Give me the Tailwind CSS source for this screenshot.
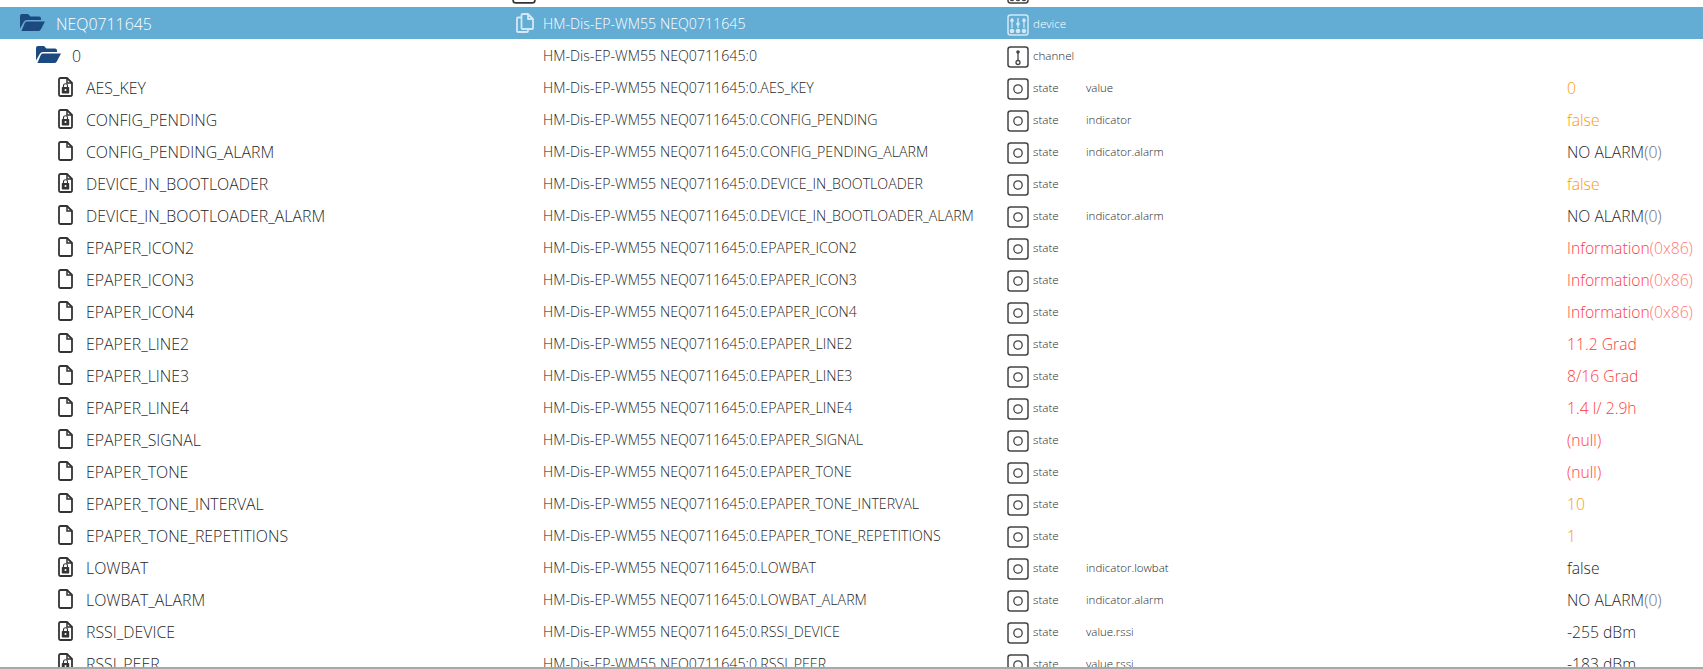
<!DOCTYPE html>
<html lang="en">
<head>
<meta charset="UTF-8">
<title>Objects</title>
<script src="https://cdn.jsdelivr.net/npm/@tailwindcss/browser@4"></script>
</head>
<body class="bg-white overflow-hidden font-['Open_Sans',sans-serif] text-[#1f1f1f]">
<svg class="hidden">
  <symbol id="folder" viewBox="0 0 25 17">
    <path fill="#1c4a80" d="M0 2a2 2 0 0 1 2-2h6l2.500 2.500H19a2 2 0 0 1 2 2V6H7a3.500 3.500 0 0 0-3.100 1.800L0 14.500z"/>
    <path fill="#1c4a80" d="M7.200 7.500H25l-4.200 8a3 3 0 0 1-2.600 1.500H1.400l3.400-8.100a2.600 2.600 0 0 1 2.400-1.400z"/>
  </symbol>
  <symbol id="file" viewBox="0 0 15 20">
    <path fill="none" stroke="currentColor" stroke-width="1.800" stroke-linejoin="round" d="M2.500 1H9l5 5v11.500a1.500 1.500 0 0 1-1.500 1.500h-10A1.500 1.500 0 0 1 1 17.500v-15A1.500 1.500 0 0 1 2.500 1z"/>
    <path fill="none" stroke="currentColor" stroke-width="1.500" d="M9 1v5h5"/>
  </symbol>
  <symbol id="lock" viewBox="0 0 15 20">
    <rect x="3.800" y="10" width="7.400" height="6.500" rx=".8" fill="currentColor"/>
    <path fill="none" stroke="currentColor" stroke-width="1.100" d="M5.500 10V8.800a2 2 0 0 1 4 0V10"/>
    <circle cx="7.500" cy="13" r="1" fill="#fff"/>
  </symbol>
  <symbol id="copy" viewBox="0 0 18 20">
    <path fill="none" stroke="#d3e8f4" stroke-width="1.800" stroke-linejoin="round" d="M6.500 1H12l5 5v9a1 1 0 0 1-1 1H6.500a1 1 0 0 1-1-1V2a1 1 0 0 1 1-1zM12 1v5h5"/>
    <path fill="none" stroke="#d3e8f4" stroke-width="1.800" stroke-linejoin="round" d="M5.500 4.500H2a1 1 0 0 0-1 1V18a1 1 0 0 0 1 1h9a1 1 0 0 0 1-1v-2"/>
  </symbol>
  <symbol id="box" viewBox="0 0 22 22">
    <rect x="1" y="1" width="20" height="20" rx="2.500" fill="none" stroke="currentColor" stroke-width="1.500"/>
  </symbol>
  <symbol id="state" viewBox="0 0 22 22">
    <rect x="1" y="1" width="20" height="20" rx="2.500" fill="none" stroke="currentColor" stroke-width="1.500"/>
    <circle cx="11" cy="11" r="4.200" fill="none" stroke="currentColor" stroke-width="1.300"/>
  </symbol>
  <symbol id="channel" viewBox="0 0 22 22">
    <rect x="1" y="1" width="20" height="20" rx="2.500" fill="none" stroke="currentColor" stroke-width="1.500"/>
    <path stroke="currentColor" stroke-width="1.300" d="M11 5v10"/>
    <circle cx="11" cy="6" r="1.800" fill="currentColor"/>
    <circle cx="11" cy="16.500" r="2" fill="#fff" stroke="currentColor" stroke-width="1.300"/>
  </symbol>
  <symbol id="device" viewBox="0 0 22 22">
    <rect x="1" y="1" width="20" height="20" rx="2.500" fill="none" stroke="currentColor" stroke-width="1.500"/>
    <path stroke="currentColor" stroke-width="1.300" d="M5 4v10M11 4v10M17 4v10"/>
    <circle cx="5" cy="6.500" r="1.800" fill="currentColor"/>
    <circle cx="11" cy="10" r="1.800" fill="currentColor"/>
    <circle cx="17" cy="6.500" r="1.800" fill="currentColor"/>
    <circle cx="5" cy="17" r="2.300" fill="currentColor"/>
    <circle cx="11" cy="17" r="2.300" fill="currentColor"/>
    <circle cx="17" cy="17" r="2.300" fill="currentColor"/>
  </symbol>
</svg>

<div class="h-[669px] overflow-hidden border-b-2 border-[#a9a9a9]">
  <div id="rows" class="-mt-[25px]"></div>
</div>

<script>
  const base = "HM-Dis-EP-WM55 NEQ0711645";
  const orange = "text-[#ff9800]", red = "text-[#ff3b3b]", dark = "text-[#1f1f1f]";
  // name, locked, role, value, value class, suffix
  const states = [
    ["AES_KEY", 1, "value", "0", orange],
    ["CONFIG_PENDING", 1, "indicator", "false", orange],
    ["CONFIG_PENDING_ALARM", 0, "indicator.alarm", "NO ALARM", dark, "(0)"],
    ["DEVICE_IN_BOOTLOADER", 1, "", "false", orange],
    ["DEVICE_IN_BOOTLOADER_ALARM", 0, "indicator.alarm", "NO ALARM", dark, "(0)"],
    ["EPAPER_ICON2", 0, "", "Information", red, "(0x86)"],
    ["EPAPER_ICON3", 0, "", "Information", red, "(0x86)"],
    ["EPAPER_ICON4", 0, "", "Information", red, "(0x86)"],
    ["EPAPER_LINE2", 0, "", "11.2 Grad", red],
    ["EPAPER_LINE3", 0, "", "8/16 Grad", red],
    ["EPAPER_LINE4", 0, "", "1.4 l/ 2.9h", red],
    ["EPAPER_SIGNAL", 0, "", "(null)", red],
    ["EPAPER_TONE", 0, "", "(null)", red],
    ["EPAPER_TONE_INTERVAL", 0, "", "10", orange],
    ["EPAPER_TONE_REPETITIONS", 0, "", "1", orange],
    ["LOWBAT", 1, "indicator.lowbat", "false", dark],
    ["LOWBAT_ALARM", 0, "indicator.alarm", "NO ALARM", dark, "(0)"],
    ["RSSI_DEVICE", 1, "value.rssi", "-255 dBm", dark],
    ["RSSI_PEER", 1, "value.rssi", "-183 dBm", dark]
  ];

  const use = (id, cls) => `<svg class="${cls}"><use href="#${id}"/></svg>`;

  function row(o) {
    return `<div class="flex items-center h-8 font-light ${o.selected ? "bg-[#63acd4] text-white" : ""}">
      <div class="w-[516px] shrink-0 flex items-center ${o.pad}">${o.icon}<span class="whitespace-nowrap text-[15.9px] pt-[4px] ${o.nameGap}">${o.name}</span></div>
      <div class="w-[27px] shrink-0 flex items-center">${o.copy || ""}</div>
      <div class="w-[464px] shrink-0 whitespace-nowrap text-[14.2px] pt-[2px]">${o.id}</div>
      <div class="w-[26px] shrink-0 flex items-center pt-[3px]">${use(o.type, "w-[22px] h-[22px] " + (o.selected ? "text-[#d3e8f4]" : "text-[#444]"))}</div>
      <div class="w-[53px] shrink-0 text-[11.6px] pt-[1px]">${o.typeLabel || ""}</div>
      <div class="w-[481px] shrink-0 text-[11.5px] pt-[1px]">${o.role || ""}</div>
      <div class="whitespace-nowrap text-[15.7px] pt-[4px] ${o.valueCls || ""}">${o.value || ""}${o.suffix ? `<span class="opacity-70">${o.suffix}</span>` : ""}</div>
    </div>`;
  }

  const folder = (cls) => use("folder", cls);
  const fileIcon = (locked) => `<span class="relative w-[15px] h-5 text-[#333]">${use("file", "absolute inset-0 w-[15px] h-5")}${locked ? use("lock", "absolute inset-0 w-[15px] h-5") : ""}</span>`;

  let html = row({ pad: "", icon: "", name: "", id: "", type: "device", copy: use("box", "w-[24px] h-[24px] -ml-1 mt-[2px] text-[#333]") });
  html += row({ selected: true, pad: "pl-5", icon: folder("w-[25px] h-[17px]"), nameGap: "ml-[11px]", name: "NEQ0711645", id: base, type: "device", typeLabel: "device", copy: use("copy", "w-[18px] h-5") });
  html += row({ pad: "pl-9", icon: folder("w-[25px] h-[17px]"), nameGap: "ml-[11px]", name: "0", id: base + ":0", type: "channel", typeLabel: "channel" });
  for (const [name, locked, role, value, valueCls, suffix] of states) {
    html += row({ pad: "pl-[58px]", icon: fileIcon(locked), nameGap: "ml-[13px]", name, id: base + ":0." + name, type: "state", typeLabel: "state", role, value, valueCls, suffix });
  }
  document.getElementById("rows").innerHTML = html;
</script>
</body>
</html>
